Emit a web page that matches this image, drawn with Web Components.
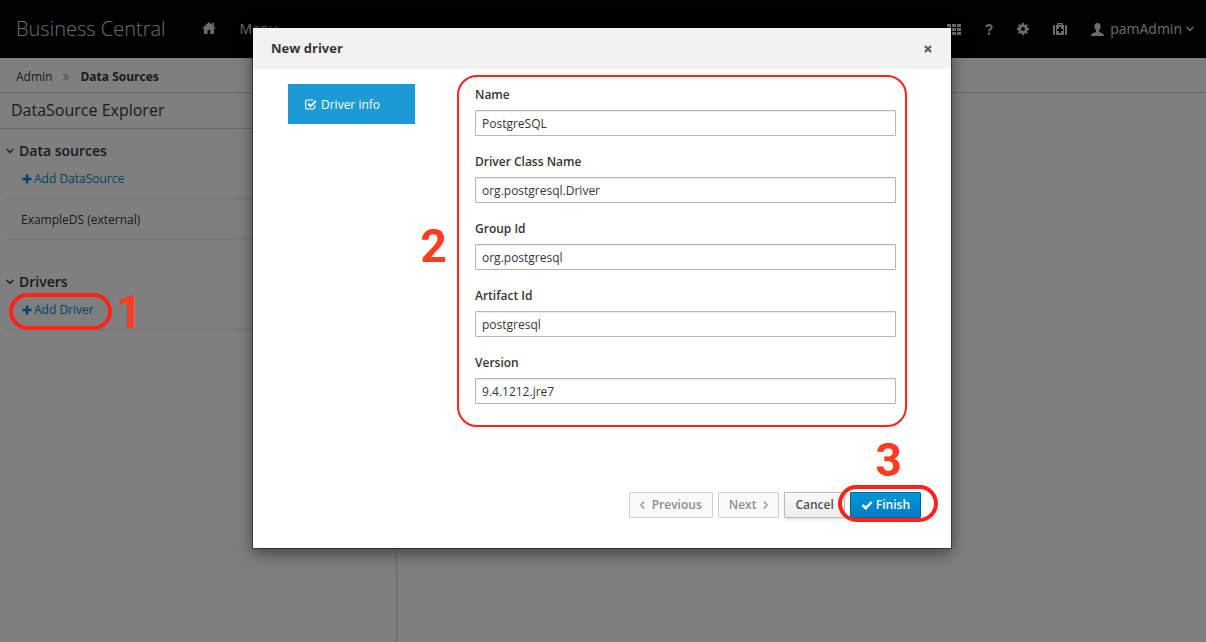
<!DOCTYPE html>
<html lang="en">
<head>
<meta charset="utf-8">
<title>Business Central</title>
<style>
html, body { margin: 0; min-height: 100%; }
body { font: 12px/20px "Open Sans", sans-serif; color: #363636; background: #fff; }
</style>
</head>
<body>
<bc-app></bc-app>
<script>
const define = (name, html, init) => {
  const template = document.createElement('template');
  template.innerHTML = html;
  customElements.define(name, class extends HTMLElement {
    constructor() {
      super();
      this.attachShadow({ mode: 'open' }).append(template.content.cloneNode(true));
    }
    connectedCallback() {
      if (init) init(this, this.shadowRoot);
    }
  });
};

const ICONS = {
  home: ['14 12', '<path d="M7 0 0 6.400h2V12h3.600V8h2.800v4H12V6.400h2L11.800 4.400V.8H10v2z"/>'],
  grid: ['14 11', '<path d="M0 0h4v3H0zM5 0h4v3H5zM10 0h4v3h-4zM0 4h4v3H0zM5 4h4v3H5zM10 4h4v3h-4zM0 8h4v3H0zM5 8h4v3H5zM10 8h4v3h-4z"/>'],
  help: ['8 11', '<path d="M1 2.600Q2 1 4 1q2.700.1 2.700 2.300 0 1.300-1.500 2.100Q4 6 4 7.300" fill="none" stroke="currentColor" stroke-width="2"/><path d="M2.900 8.600h2.200v2.200H2.900z"/>'],
  gear: ['12 12', '<path fill-rule="evenodd" d="M5 0h2l.4 1.700 1 .4L9.900 1.200l.9.900.1.100-1 1.400.4 1L12 5v2l-1.700.4-.4 1 .9 1.500-1 1-1.400-.9-1 .4L7 12H5l-.4-1.600-1-.4-1.400.9-1.100-1 .9-1.500-.4-1L0 7V5l1.600-.4.4-1-.9-1.400 1.100-1.100L3.600 2l1-.4zM6 4a2 2 0 1 0 0 4 2 2 0 0 0 0-4z"/>'],
  medkit: ['14 12', '<path fill-rule="evenodd" d="M4 2V1q0-1 1-1h4q1 0 1 1v1h1v10H3V2zm1.300 0h3.400v-.8H5.300zM6 4v2H4v2h2v2h2V8h2V6H8V4zM2 2v10H1q-1 0-1-1V3q0-1 1-1zM12 2h1q1 0 1 1v8q0 1-1 1h-1z"/>'],
  user: ['13 13', '<path d="M6.500 0C8.600 0 9.700 1.500 9.600 3.600 9.500 5.600 8.800 6.600 8 7.300V9l3.500 1.200Q13 10.800 13 13H0q0-2.200 1.500-2.800L5 9V7.300C4.200 6.600 3.500 5.600 3.400 3.600 3.300 1.500 4.400 0 6.500 0z"/>'],
  down: ['8 6', '<path d="m.7 1 3.300 3.400L7.300 1" fill="none" stroke="currentColor" stroke-width="1.400"/>'],
  left: ['5 8', '<path d="M4.200.5.900 4l3.300 3.500" fill="none" stroke="currentColor" stroke-width="1.200"/>'],
  right: ['5 8', '<path d="M.8.5 4.100 4 .8 7.500" fill="none" stroke="currentColor" stroke-width="1.200"/>'],
  sep: ['6 8', '<path d="M.5.800 2.900 4 .5 7.200M3 .8 5.400 4 3 7.200" fill="none" stroke="currentColor"/>'],
  plus: ['10 10', '<path d="M3.700.5h2.600v3.200H9.500v2.600H6.300v3.200H3.700V6.300H.5V3.700h3.200z"/>'],
  check: ['12 10', '<path d="m1.500 5 3.200 3.200L10.700 2" fill="none" stroke="currentColor" stroke-width="2.500"/>'],
  checkbox: ['12 11', '<path d="M9.800 6.200v2q0 1.800-1.800 1.800H2.400Q.6 10 .6 8.200V2.800Q.6 1 2.400 1H8.500" fill="none" stroke="currentColor" stroke-width="1.100"/><path d="m3 4.700 2.500 2.500L11 2" fill="none" stroke="currentColor" stroke-width="1.900"/>'],
  close: ['8 8', '<path d="m1 1 6 6M7 1 1 7" fill="none" stroke="currentColor" stroke-width="2.200"/>']
};

define('bc-icon', `
<style>:host { display: inline-flex; flex: none; } svg { display: block; fill: currentColor; }</style>
<svg aria-hidden="true"></svg>`, (host, root) => {
  const [size, shapes] = ICONS[host.getAttribute('name')];
  const [w, h] = size.split(' ');
  const svg = root.querySelector('svg');
  svg.setAttribute('viewBox', '0 0 ' + w + ' ' + h);
  svg.setAttribute('width', w);
  svg.setAttribute('height', h);
  svg.innerHTML = shapes;
});

define('bc-masthead', `
<style>
:host { display: flex; align-items: center; height: 58px; padding: 0 12px 0 16px; box-sizing: border-box;
  background: #030303; color: #d8d8d8; font-size: 14px; white-space: nowrap; }
a { color: inherit; text-decoration: none; }
.brand { font-size: 20px; font-weight: 300; line-height: 30px; margin-right: 36px; }
nav { display: flex; align-items: center; gap: 24px; }
.tools { display: flex; align-items: center; gap: 24px; margin-left: auto; }
button { display: flex; align-items: center; padding: 0; border: 0; background: none; color: inherit; font: inherit; }
.account { gap: 4px; }
.account span { margin-left: 2px; }
</style>
<a class="brand" href="#">Business Central</a>
<nav><a href="#" aria-label="Home"><bc-icon name="home"></bc-icon></a><a href="#">Menu</a></nav>
<div class="tools">
  <button aria-label="Applications"><bc-icon name="grid"></bc-icon></button>
  <button aria-label="Help"><bc-icon name="help"></bc-icon></button>
  <button aria-label="Settings"><bc-icon name="gear"></bc-icon></button>
  <button aria-label="Support"><bc-icon name="medkit"></bc-icon></button>
  <button class="account"><bc-icon name="user"></bc-icon><span>pamAdmin</span><bc-icon name="down"></bc-icon></button>
</div>`);

define('bc-breadcrumb', `
<style>
:host { display: flex; align-items: center; gap: 11px; height: 35px; padding: 4px 16px 0; box-sizing: border-box; border-bottom: 1px solid #d1d1d1; }
a { color: inherit; text-decoration: none; }
bc-icon { color: #888; }
</style>
<a href="#">Admin</a><bc-icon name="sep"></bc-icon><strong>Data Sources</strong>`);

define('bc-section', `
<style>
:host { display: block; }
h2 { display: flex; align-items: center; gap: 5px; margin: 0; font-size: 14px; font-weight: 600; line-height: 24px; }
.add { padding: 6px 16px 8px; border-bottom: 1px solid #e0e0e0; }
a { display: inline-flex; align-items: center; gap: 2px; line-height: 20px; color: #0088ce; text-decoration: none; }
</style>
<h2><bc-icon name="down"></bc-icon><slot name="title"></slot></h2>
<div class="add"><a href="#"><bc-icon name="plus"></bc-icon><slot name="action"></slot></a></div>
<slot></slot>`);

define('bc-explorer', `
<style>
:host { display: block; width: 396px; border-right: 1px solid #d1d1d1; }
h1 { margin: 0; padding: 5px 11px 6px; font-size: 16px; font-weight: 400; line-height: 24px; border-bottom: 1px solid #d1d1d1; }
.sections { display: grid; gap: 30px; padding: 10px 6px; }
.item { padding: 11px 15px 9px; border-bottom: 1px solid #ededed; }
</style>
<h1>DataSource Explorer</h1>
<div class="sections">
  <bc-section><span slot="title">Data sources</span><span slot="action">Add DataSource</span><div class="item">ExampleDS (external)</div></bc-section>
  <bc-section><span slot="title">Drivers</span><span slot="action">Add Driver</span></bc-section>
</div>`);

define('bc-field', `
<style>
:host { display: grid; gap: 5px; }
label { font-weight: 600; line-height: 20px; }
input { box-sizing: border-box; width: 100%; height: 26px; padding: 2px 6px; border: 1px solid #b5b5b5; border-radius: 1px;
  background: #fff; color: inherit; font: inherit; box-shadow: inset 0 1px 1px rgba(3,3,3,.075); outline: 0; }
</style>
<label for="field"></label><input id="field" type="text">`, (host, root) => {
  root.querySelector('label').textContent = host.getAttribute('label');
  root.querySelector('input').value = host.getAttribute('value');
});

define('bc-button', `
<style>
:host { display: block; }
button { display: flex; align-items: center; gap: 7px; height: 26px; padding: 0 10px; border: 1px solid #bbb; border-radius: 1px;
  background: linear-gradient(#fafafa, #ededed); color: #4d5258; font: inherit; font-weight: 600; box-shadow: 0 2px 3px rgba(3,3,3,.1); white-space: nowrap; }
button:disabled { background: #fafafa; border-color: #d1d1d1; color: #8b8d8f; box-shadow: none; }
:host([primary]) button { gap: 3px; background: linear-gradient(#0098d8, #007bc3); border-color: #00659c; color: #fff; }
</style>
<button type="button"><slot></slot></button>`, (host, root) => {
  root.querySelector('button').disabled = host.hasAttribute('disabled');
});

define('bc-callout', `
<style>
:host { position: absolute; pointer-events: none; box-sizing: border-box; border: 4px solid #ff231a; border-radius: 20px; }
:host([thin]) { border-width: 2px; }
span { position: absolute; font: bold 46px/46px Roboto, sans-serif; color: #ff3b21; }
:host([side="right"]) span { left: calc(100% + 8px); top: -8px; }
:host([side="left"]) span { right: calc(100% + 12px); top: 146px; }
:host([side="top"]) span { right: 32px; bottom: calc(100% + 6px); }
</style>
<span><slot></slot></span>`);

define('bc-dialog', `
<style>
:host { display: flex; flex-direction: column; position: relative; background: #fff; box-shadow: 0 0 0 1px rgba(0,0,0,.4), 0 5px 15px rgba(0,0,0,.5); }
header { display: flex; align-items: center; justify-content: space-between; height: 41px; padding: 0 19px 0 18px; background: #f2f2f2; }
h2 { margin: 0; font-size: 13px; font-weight: 700; line-height: 20px; padding-bottom: 1px; }
.close { display: flex; padding: 0; border: 0; background: none; color: #5c5c5c; }
.body { display: grid; grid-template-columns: 127px 1fr; gap: 60px; padding: 15px 55px 0 35px; }
.step { display: flex; align-items: center; gap: 4px; height: 40px; box-sizing: border-box; padding: 1px 17px 0; background: #1b9ad5; color: #fff; text-decoration: none; }
form { display: grid; gap: 16px; padding-top: 1px; position: relative; }
form bc-callout { inset: -9px -11px -23px -18px; }
footer { display: flex; justify-content: flex-end; gap: 5px; padding: 88px 30px 30px; }
.finish { position: relative; }
.finish bc-callout { inset: -7px -17px -4px -12px; }
</style>
<header><h2>New driver</h2><button class="close" aria-label="Close"><bc-icon name="close"></bc-icon></button></header>
<div class="body">
  <div><a class="step" href="#"><bc-icon name="checkbox"></bc-icon>Driver info</a></div>
  <form>
    <bc-field label="Name" value="PostgreSQL"></bc-field>
    <bc-field label="Driver Class Name" value="org.postgresql.Driver"></bc-field>
    <bc-field label="Group Id" value="org.postgresql"></bc-field>
    <bc-field label="Artifact Id" value="postgresql"></bc-field>
    <bc-field label="Version" value="9.4.1212.jre7"></bc-field>
    <bc-callout thin side="left">2</bc-callout>
  </form>
</div>
<footer>
  <bc-button disabled><bc-icon name="left"></bc-icon>Previous</bc-button>
  <bc-button disabled>Next<bc-icon name="right"></bc-icon></bc-button>
  <bc-button>Cancel</bc-button>
  <div class="finish"><bc-button primary><bc-icon name="check"></bc-icon>Finish</bc-button><bc-callout side="top">3</bc-callout></div>
</footer>`);

define('bc-app', `
<style>
:host { display: flex; flex-direction: column; min-height: 100vh; position: relative; }
bc-explorer { flex: 1; }
.backdrop { position: absolute; inset: 0; padding: 28px 255px 28px 253px; background: rgba(0,0,0,.5); }
.driver { left: 9px; top: 293px; width: 103px; height: 37px; }
</style>
<bc-masthead></bc-masthead>
<bc-breadcrumb></bc-breadcrumb>
<bc-explorer></bc-explorer>
<div class="backdrop"><bc-dialog role="dialog" aria-label="New driver"></bc-dialog></div>
<bc-callout class="driver" side="right">1</bc-callout>`);
</script>
</body>
</html>
